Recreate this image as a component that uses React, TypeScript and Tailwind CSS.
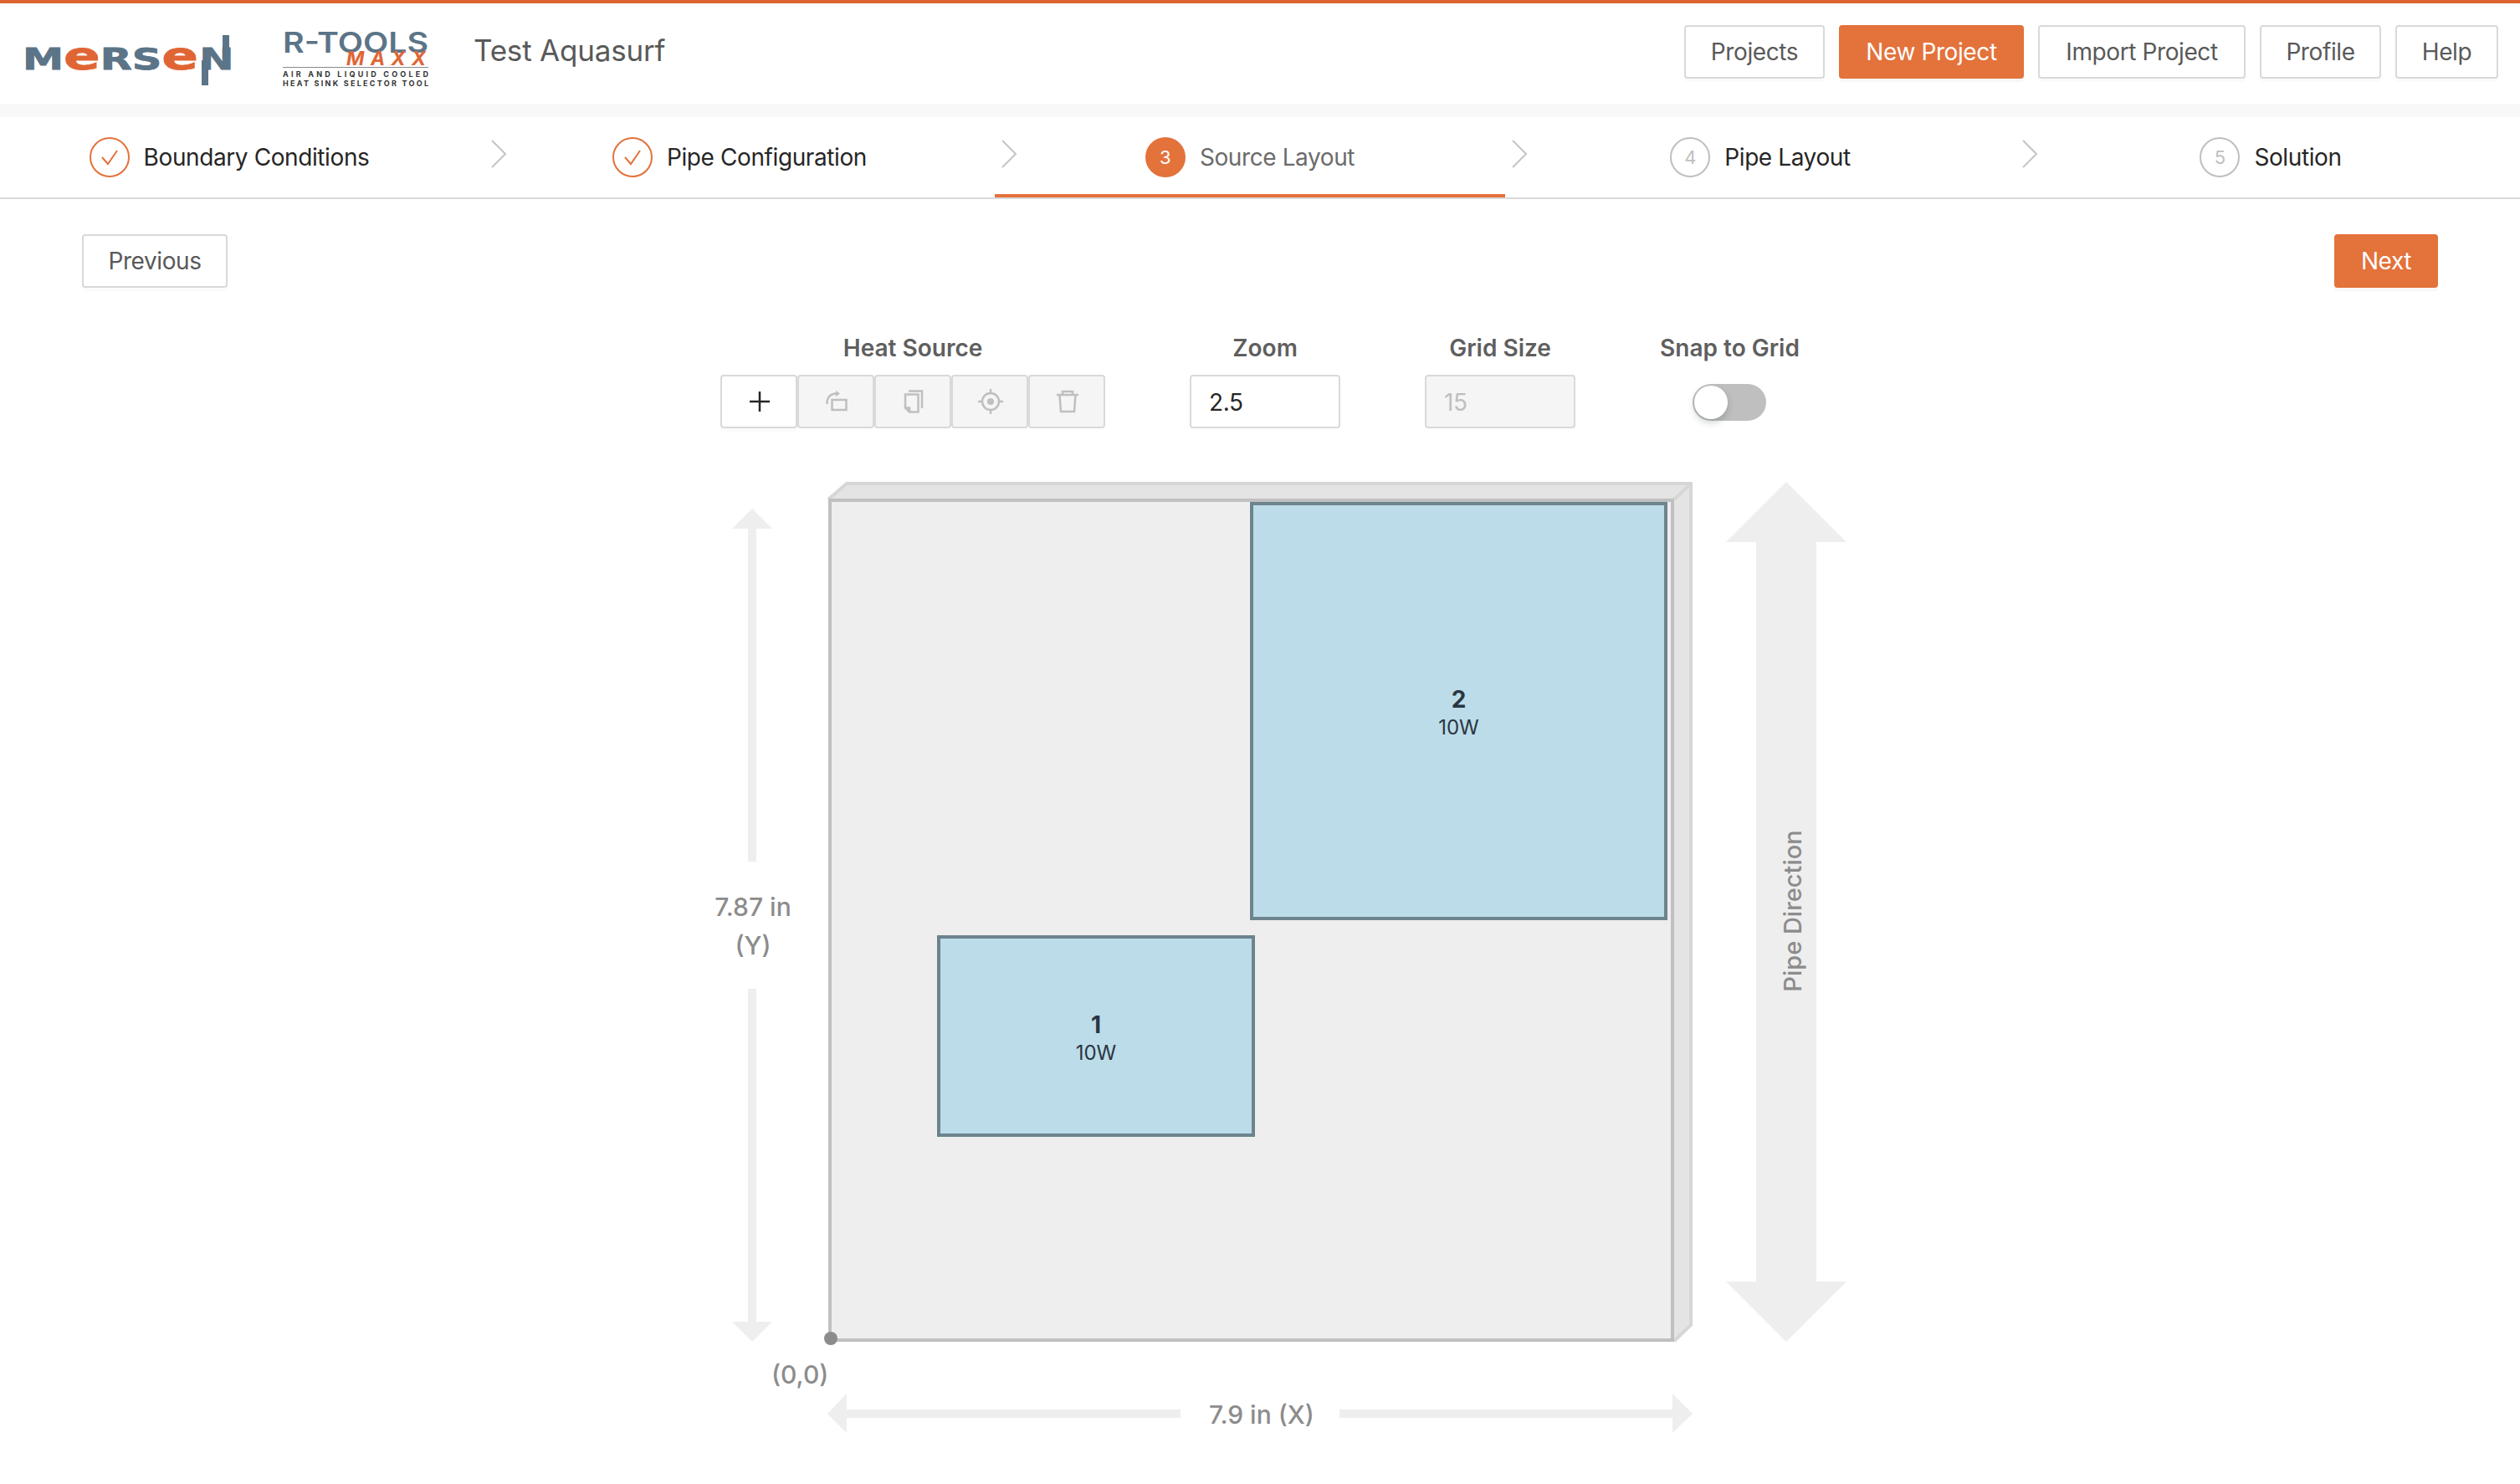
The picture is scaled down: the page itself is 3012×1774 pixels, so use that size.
import type { ReactNode } from "react";

function MersenLogo() {
  const slate = { fill: "#5b7487", stroke: "#5b7487", strokeWidth: 0.8, fontSize: 36 };
  const orange = { fill: "#e06535", stroke: "#e06535", strokeWidth: 0.8, fontSize: 47 };
  return (
    <svg width="260" height="64" viewBox="28 40 260 64" className="mt-[16px] shrink-0" style={{ fontFamily: "'DejaVu Sans', sans-serif", fontWeight: 700 }}>
      <text transform="translate(27 83) scale(1.37 1)">
        <tspan {...slate}>M</tspan>
        <tspan {...orange}>e</tspan>
        <tspan {...slate}>RS</tspan>
        <tspan {...orange}>e</tspan>
        <tspan {...slate} dx="1">N</tspan>
      </text>
      <line x1="245" y1="102" x2="245" y2="72" stroke="#5b7487" strokeWidth="8" />
      <line x1="270" y1="42" x2="270" y2="70" stroke="#5b7487" strokeWidth="8" />
    </svg>
  );
}

function RToolsLogo() {
  return (
    <svg width="176" height="80" viewBox="337 30 176 80" className="mt-[12px] shrink-0" style={{ fontFamily: "Inter, sans-serif" }}>
      <text x="338" y="63" fontSize="34" fontWeight="600" fill="#5b7487" textLength="174" lengthAdjust="spacingAndGlyphs">R-TOOLS</text>
      <text x="414" y="78" fontSize="23" fontWeight="700" fontStyle="italic" fill="#e06535" textLength="95" lengthAdjust="spacing">MAXX</text>
      <line x1="338" y1="80.5" x2="512" y2="80.5" stroke="#8a8a8a" strokeWidth="1" />
      <text x="338" y="92" fontSize="9" fontWeight="700" fill="#333" textLength="174" lengthAdjust="spacing">AIR AND LIQUID COOLED</text>
      <text x="338" y="103" fontSize="9" fontWeight="700" fill="#333" textLength="174" lengthAdjust="spacing">HEAT SINK SELECTOR TOOL</text>
    </svg>
  );
}

function PlainButton({ children, className }: { children: ReactNode; className: string }) {
  return (
    <button className={`h-16 rounded border-2 border-[#d9d9d9] bg-white text-[28px] tracking-[-0.4px] text-[#595959] shadow-[0_4px_0_rgba(0,0,0,0.015)] ${className}`}>
      {children}
    </button>
  );
}

function PrimaryButton({ children, className }: { children: ReactNode; className: string }) {
  return (
    <button className={`h-16 rounded border-2 border-[#e3723b] bg-[#e3723b] text-[28px] tracking-[-0.4px] text-white shadow-[0_4px_0_rgba(0,0,0,0.03)] ${className}`}>
      {children}
    </button>
  );
}

function Chevron() {
  return (
    <svg width="20" height="36" viewBox="0 0 20 36" fill="none" stroke="#c4c4c4" strokeWidth="2" className="absolute top-[26px] -right-[27px]">
      <path d="M2 2 L18 18 L2 34" />
    </svg>
  );
}

type StepState = "done" | "active" | "todo";

function Step({ n, label, state, last }: { n: number; label: string; state: StepState; last?: boolean }) {
  return (
    <div className="relative flex h-24 w-[610px] shrink-0 items-center justify-center gap-[17px]">
      {state === "done" && (
        <span className="flex h-12 w-12 items-center justify-center rounded-full border-2 border-[#e3723b]">
          <svg width="24" height="24" viewBox="0 0 24 24" fill="none" stroke="#e3723b" strokeWidth="2">
            <path d="M3 12 L10 20 L21 4" />
          </svg>
        </span>
      )}
      {state === "active" && (
        <span className="flex h-12 w-12 items-center justify-center rounded-full bg-[#e3723b] text-[22px] text-white">{n}</span>
      )}
      {state === "todo" && (
        <span className="flex h-12 w-12 items-center justify-center rounded-full border-2 border-[#bfbfbf] text-[22px] text-[#bfbfbf]">{n}</span>
      )}
      <span className={state === "active" ? "text-[28px] tracking-[-0.4px] text-[#6b6b6b]" : "text-[28px] tracking-[-0.4px] text-[#262626]"}>{label}</span>
      {state === "active" && <span className="absolute inset-x-0 bottom-0 h-1 bg-[#e3723b]" />}
      {!last && <Chevron />}
    </div>
  );
}

function Field({ label, children }: { label: string; children: ReactNode }) {
  return (
    <div className="flex flex-col items-center">
      <div className="mb-[10px] h-11 text-[28px] leading-[44px] font-semibold text-[#5f5f5f]">{label}</div>
      <div className="flex h-16 items-center">{children}</div>
    </div>
  );
}

function ToolButton({ children, disabled }: { children: ReactNode; disabled?: boolean }) {
  return (
    <div
      className={
        disabled
          ? "flex h-16 w-[92px] items-center justify-center rounded border-2 border-[#d9d9d9] bg-[#f5f5f5] pl-[2px]"
          : "flex h-16 w-[92px] items-center justify-center rounded border-2 border-[#d9d9d9] bg-white pl-[2px] shadow-[0_4px_0_rgba(0,0,0,0.015)]"
      }
    >
      {children}
    </div>
  );
}

function Toolbar() {
  const ic = { width: 32, height: 32, viewBox: "0 0 32 32", fill: "none", stroke: "#bfbfbf", strokeWidth: 2.5 };
  return (
    <div className="mt-[50px] flex justify-center gap-[101px]">
      <Field label="Heat Source">
        <div className="flex">
          <ToolButton>
            <svg width="28" height="28" viewBox="0 0 28 28" stroke="#262626" strokeWidth="2.5">
              <path d="M14 2 V26 M2 14 H26" />
            </svg>
          </ToolButton>
          <ToolButton disabled>
            <svg {...ic}>
              <rect x="10.5" y="14" width="17" height="12" />
              <path d="M4.5 19 C4 11 9 6.5 15 6.5" />
              <path d="M15 3 L20 6.5 L15 10 Z" fill="#bfbfbf" stroke="none" />
            </svg>
          </ToolButton>
          <ToolButton disabled>
            <svg {...ic}>
              <path d="M10 3.5 H26 V24" />
              <path d="M6 7.5 H21.5 V28.5 H11 L6 23.5 Z" />
              <path d="M6 23.5 H11 V28.5" />
            </svg>
          </ToolButton>
          <ToolButton disabled>
            <svg {...ic}>
              <circle cx="16" cy="16" r="10" />
              <circle cx="16" cy="16" r="4" fill="#bfbfbf" stroke="none" />
              <path d="M16 1 V6 M16 26 V31 M1 16 H6 M26 16 H31" />
            </svg>
          </ToolButton>
          <ToolButton disabled>
            <svg {...ic}>
              <path d="M3 8 H29" />
              <path d="M10 8 V4 H22 V8" />
              <path d="M6.5 8 L8 28 H24 L25.5 8" />
            </svg>
          </ToolButton>
        </div>
      </Field>
      <Field label="Zoom">
        <div className="flex h-16 w-[180px] items-center rounded border-2 border-[#d9d9d9] bg-white pt-[2px] pl-[21px] text-[28px] tracking-[-0.4px] text-[#262626]">2.5</div>
      </Field>
      <Field label="Grid Size">
        <div className="flex h-16 w-[180px] items-center rounded border-2 border-[#d9d9d9] bg-[#f5f5f5] pt-[2px] pl-[21px] text-[28px] tracking-[-0.4px] text-[#bfbfbf]">15</div>
      </Field>
      <Field label="Snap to Grid">
        <div className="relative mt-[2px] h-11 w-[88px] rounded-full bg-[#bfbfbf]">
          <span className="absolute top-[2px] left-[2px] h-10 w-10 rounded-full bg-white shadow-[0_4px_8px_rgba(0,35,11,0.2)]" />
        </div>
      </Field>
    </div>
  );
}

function Source({ id, className }: { id: number; className: string }) {
  return (
    <div className={`absolute flex flex-col items-center justify-center border-4 border-[#6d848d] bg-[#bcdce9] pt-[6px] text-[#2a3542] ${className}`}>
      <span className="text-[28px] leading-[34px] font-bold">{id}</span>
      <span className="text-[24px] leading-[34px]">10W</span>
    </div>
  );
}

function Diagram() {
  return (
    <div className="relative mt-[64px] ml-[875px] h-[1140px] w-[1332px]">
      <svg width="1332" height="1140" viewBox="875 576 1332 1140" className="absolute inset-0">
        {/* plate with bevel */}
        <path d="M990 596 L1012 578 H2021 V1584 L2001 1604 H990 Z" fill="#e4e4e4" />
        <path d="M990 597 L1012 578 H2021 V1584 L2001 1603" fill="none" stroke="#d6d6d6" strokeWidth="4" />
        <path d="M2001 597 L2021 578" stroke="#d6d6d6" strokeWidth="4" />
        <rect x="992" y="598" width="1007" height="1004" fill="#eeeeee" stroke="#c0c0c0" strokeWidth="4" />
        {/* Y arrow */}
        <path d="M899 608 L923 632 H904 V1030 H894 V632 H875 Z" fill="#eeeeee" />
        <path d="M899 1604 L923 1580 H904 V1182 H894 V1580 H875 Z" fill="#eeeeee" />
        {/* pipe direction arrow */}
        <path d="M2135 576 L2207 648 H2171 V1532 H2207 L2135 1604 L2063 1532 H2099 V648 H2063 Z" fill="#eeeeee" />
        {/* X arrow */}
        <path d="M989 1690 L1012 1666 V1685 H1411 V1695 H1012 V1713 Z" fill="#eeeeee" />
        <path d="M2023 1690 L1999 1666 V1685 H1601 V1695 H1999 V1713 Z" fill="#eeeeee" />
        <circle cx="993" cy="1600" r="8" fill="#8c8c8c" />
      </svg>
      <Source id={2} className="top-[24px] left-[619px] h-[500px] w-[499px]" />
      <Source id={1} className="top-[542px] left-[245px] h-[241px] w-[380px]" />
      <div className="absolute top-[485px] left-0 w-[50px] text-center text-[30px] leading-[46px] font-medium whitespace-nowrap text-[#8c8c8c]">
        <div className="flex justify-center">7.87 in</div>
        <div>(Y)</div>
      </div>
      <span className="absolute top-[1049px] left-[47px] text-[30px] leading-9 font-medium text-[#8c8c8c]">(0,0)</span>
      <span className="absolute top-[1097px] left-[570px] w-[120px] text-center text-[30px] leading-9 font-medium whitespace-nowrap text-[#8c8c8c]">7.9 in (X)</span>
      <span className="absolute top-[495px] left-[1171px] -rotate-90 text-[29px] leading-9 font-medium whitespace-nowrap text-[#8c8c8c]">Pipe Direction</span>
    </div>
  );
}

export default function App() {
  return (
    <div className="h-[1774px] overflow-hidden bg-white" style={{ fontFamily: "Inter, sans-serif" }}>
      <header className="flex h-[124px] items-center border-t-4 border-[#dc6230] pr-[26px] pl-[28px]">
        <MersenLogo />
        <div className="ml-[49px]">
          <RToolsLogo />
        </div>
        <div className="mb-[8px] ml-[53px] text-[35px] tracking-[-0.2px] text-[#595959]">Test Aquasurf</div>
        <div className="mb-1 ml-auto flex gap-[17px]">
          <PlainButton className="w-[168px]">Projects</PlainButton>
          <PrimaryButton className="w-[221px]">New Project</PrimaryButton>
          <PlainButton className="w-[248px]">Import Project</PlainButton>
          <PlainButton className="w-[145px]">Profile</PlainButton>
          <PlainButton className="w-[123px]">Help</PlainButton>
        </div>
      </header>
      <div className="h-4 bg-[#f8f8f8]" />
      <nav className="border-b-2 border-[#d9d9d9]">
        <div className="-ml-[31px] flex">
          <Step n={1} label="Boundary Conditions" state="done" />
          <Step n={2} label="Pipe Configuration" state="done" />
          <Step n={3} label="Source Layout" state="active" />
          <Step n={4} label="Pipe Layout" state="todo" />
          <Step n={5} label="Solution" state="todo" last />
        </div>
      </nav>
      <div className="mt-[42px] flex justify-between px-[98px]">
        <PlainButton className="w-[174px]">Previous</PlainButton>
        <PrimaryButton className="w-[124px]">Next</PrimaryButton>
      </div>
      <Toolbar />
      <Diagram />
    </div>
  );
}
